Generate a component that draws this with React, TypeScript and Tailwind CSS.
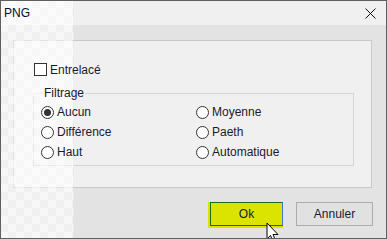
import React from "react";

function Radio({ checked, label }: { checked?: boolean; label: string }) {
  return (
    <div className="flex items-center h-[20px]">
      <div className="relative z-20 w-[13px] h-[13px] rounded-full border border-[#333333] bg-white flex items-center justify-center">
        {checked && <div className="w-[7px] h-[7px] rounded-full bg-[#333333]" />}
      </div>
      <span className="relative z-20 ml-[3px] text-[12px] leading-none text-[#1a1a2e]">{label}</span>
    </div>
  );
}

export default function App() {
  return (
    <div
      className="relative w-[387px] h-[239px] bg-[#e3e3e3] border border-[#5f5f5f] overflow-hidden flex flex-col"
      style={{ fontFamily: '"Liberation Sans", Arial, sans-serif' }}
    >
      {/* Title bar */}
      <div className="h-[24px] bg-[#f0f0f0] flex items-center justify-between shrink-0">
        <span className="relative z-20 ml-[3px] text-[12px] text-[#0a0a30]">PNG</span>
        <svg width="11" height="11" viewBox="0 0 11 11" className="mr-[10px]">
          <path d="M0.5 0.5 L10.5 10.5 M10.5 0.5 L0.5 10.5" stroke="#111" strokeWidth="1" />
        </svg>
      </div>

      {/* Body */}
      <div className="flex flex-col pl-[12px] pt-[15px]">
        <div className="w-[359px] h-[148px] border border-[#c9c9c9] bg-[#f0f0f0] pl-[19px] pt-[22px] flex flex-col">
          <div className="flex items-center ml-[1px]">
            <div className="relative z-20 w-[13px] h-[13px] border border-[#333333] bg-white" />
            <span className="relative z-20 ml-[3px] text-[12px] leading-none text-[#1a1a2e]">Entrelacé</span>
          </div>

          <div className="relative mt-[17px] w-[321px] h-[73px] border border-[#d5d5d5] pl-[7px] pt-[8px] flex">
            <span className="absolute left-[9px] top-[-8px] px-[1px] bg-[#f0f0f0] text-[12px] leading-[14px]">
              <span className="relative z-20 text-[#1a1a2e]">Filtrage</span>
            </span>
            <div className="flex flex-col w-[155px]">
              <Radio checked label="Aucun" />
              <Radio label="Différence" />
              <Radio label="Haut" />
            </div>
            <div className="flex flex-col">
              <Radio label="Moyenne" />
              <Radio label="Paeth" />
              <Radio label="Automatique" />
            </div>
          </div>
        </div>

        {/* Buttons */}
        <div className="flex justify-end mt-[14px] pr-[13px] gap-[13px]">
          <div className="relative w-[73px] h-[24px]">
            <div className="absolute left-[-2px] top-0 w-[75px] h-[26px] bg-[#dbe300]" />
            <div className="absolute inset-0 border border-[#1b6b1b] border-r-[#3a7bd5] bg-[#dbe300] flex items-center justify-center text-[12px] text-[#1a1a2e]">
              Ok
            </div>
          </div>
          <div className="w-[77px] h-[24px] border border-[#adadad] bg-[#e1e1e1] flex items-center justify-center text-[12px] text-[#1a1a2e]">
            Annuler
          </div>
        </div>
      </div>

      {/* Checker overlay (behind text, above backgrounds) */}
      <div className="absolute z-10 left-[-1px] top-[-1px] w-[74px] h-[240px] border-r border-[rgba(0,0,0,0.05)] bg-[repeating-conic-gradient(rgba(255,255,255,0.7)_0%_25%,rgba(255,255,255,0.45)_0%_50%)] bg-[length:16px_16px]" />

      {/* Cursor */}
      <svg
        className="absolute z-30 left-[265px] top-[221px]"
        width="14"
        height="22"
        viewBox="0 0 14 22"
      >
        <path
          d="M1 1 L1 17 L4.5 13.5 L7 19.5 L9.5 18.5 L7 12.5 L12 12.5 Z"
          fill="#fff"
          stroke="#000"
          strokeWidth="1"
          strokeLinejoin="miter"
        />
      </svg>
    </div>
  );
}
